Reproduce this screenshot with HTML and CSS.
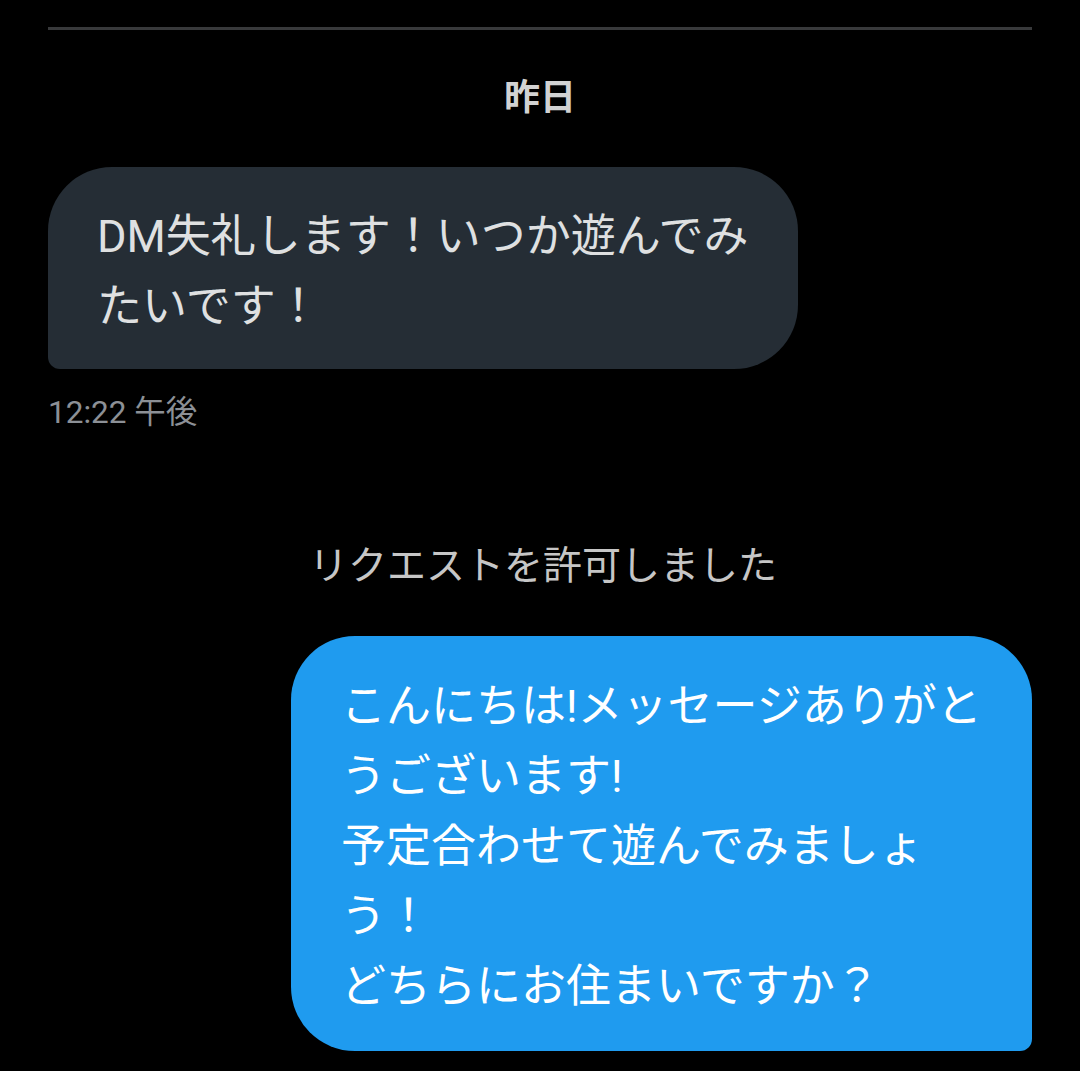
FILE: index.html
```html
<!DOCTYPE html>
<html lang="ja">
<head>
<meta charset="utf-8">
<title>DM</title>
<link rel="stylesheet" href="styles.css">
</head>
<body>
<div class="thread">
  <div class="divider"></div>
  <div class="day">昨日</div>
  <div class="msg msg-in">
    <div class="bubble bubble-in">DM失礼します！いつか遊んでみ<br>たいです！</div>
    <div class="time">12:22 午後</div>
  </div>
  <div class="notice">リクエストを許可しました</div>
  <div class="msg msg-out">
    <div class="bubble bubble-out">こんにちは!メッセージありがと<br>うございます!<br>予定合わせて遊んでみましょ<br>う！<br>どちらにお住まいですか？</div>
  </div>
</div>
</body>
</html>
```

FILE: styles.css
```css
html, body {
  margin: 0;
  padding: 0;
  background: #000;
}
body {
  font-family: Roboto, "Noto Sans CJK JP", sans-serif;
  width: 1080px;
  height: 1071px;
  overflow: hidden;
}
.thread {
  padding: 27px 48px 0;
  display: flex;
  flex-direction: column;
}
.divider {
  height: 3px;
  background: #38393b;
}
.day {
  margin-top: 46px;
  text-align: center;
  font-size: 36px;
  line-height: 44px;
  font-weight: 700;
  color: #d2d2d2;
}
.msg {
  display: flex;
  flex-direction: column;
}
.msg-in {
  margin-top: 47px;
  align-items: flex-start;
}
.msg-out {
  margin-top: 45px;
  align-items: flex-end;
}
.bubble {
  font-size: 45px;
  line-height: 70px;
  white-space: nowrap;
  box-sizing: border-box;
}
.bubble-in {
  width: 750px;
  padding: 35px 30px 27px 49px;
  background: #252d35;
  color: #dfe0e1;
  border-radius: 64px 64px 64px 12px;
}
.bubble-out {
  width: 741px;
  padding: 36px 30px 29px 50px;
  background: #1f9bef;
  color: #fff;
  border-radius: 64px 64px 12px 64px;
}
.time {
  margin-top: 24px;
  font-size: 31.5px;
  line-height: 40px;
  color: #8c9096;
}
.notice {
  margin-top: 108px;
  text-align: center;
  padding-left: 6px;
  font-size: 39px;
  line-height: 50px;
  color: #c6c6c6;
}
```
